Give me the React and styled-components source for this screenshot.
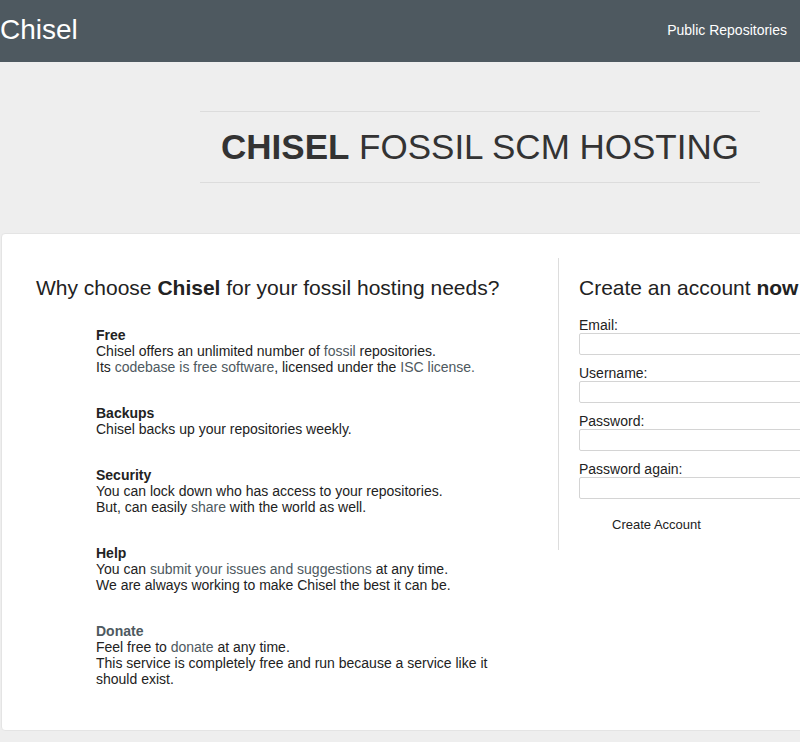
import React from "react";
import styled, { createGlobalStyle } from "styled-components";

const GlobalStyle = createGlobalStyle`
  html, body {
    margin: 0;
    padding: 0;
    overflow: hidden;
  }
  body {
    background: #eeeeee;
    font-family: "Liberation Sans", Arial, sans-serif;
    color: #222;
  }
`;

const Header = styled.div`
  height: 62px;
  background: #4e5960;
  display: flex;
  align-items: center;
  justify-content: space-between;
  padding-right: 13px;
`;

const Brand = styled.a`
  color: #fff;
  font-size: 28px;
  text-decoration: none;
  margin-top: -2px;
`;

const NavLink = styled.a`
  color: #fff;
  font-size: 14px;
  text-decoration: none;
  margin-top: -2px;
`;

const Viewport = styled.div`
  width: 100%;
  overflow: hidden;
`;

const Page = styled.div`
  width: 960px;
`;

const Jumbo = styled.div`
  margin: 49px 200px 50px;
  height: 70px;
  border-top: 1px solid #dcdcdc;
  border-bottom: 1px solid #dcdcdc;
  display: flex;
  align-items: center;
  justify-content: center;
`;

const JumboTitle = styled.h1`
  margin: 0;
  font-size: 35px;
  font-weight: normal;
  color: #333;
  b {
    font-weight: bold;
  }
`;

const Card = styled.div`
  margin-left: 1px;
  background: #fff;
  border: 1px solid #e4e4e4;
  border-radius: 4px;
  padding: 24px 0 25px;
  display: flex;
  align-items: flex-start;
`;

const LeftCol = styled.div`
  flex: 0 0 522px;
  padding: 18px 0 18px 34px;
`;

const RightCol = styled.div`
  flex: 1;
  border-left: 1px solid #dddddd;
  padding: 18px 0 14px 20px;
`;

const Heading = styled.h2`
  margin: 0 0 ${(p) => p.$gap}px;
  font-size: 21px;
  line-height: 23px;
  font-weight: normal;
  color: #222;
`;

const Features = styled.div`
  padding-left: 60px;
`;

const Feature = styled.div`
  font-size: 14px;
  line-height: 16px;
  margin-bottom: 30px;
  &:last-child {
    margin-bottom: 0;
  }
`;

const FeatureTitle = styled.div`
  font-weight: bold;
  color: ${(p) => (p.$link ? "#4e5960" : "#222")};
`;

const Link = styled.a`
  color: #4e5960;
  text-decoration: none;
`;

const Field = styled.div`
  display: flex;
  flex-direction: column;
  margin-bottom: 10px;
`;

const Label = styled.label`
  font-size: 14px;
  line-height: 16px;
  color: #222;
`;

const Input = styled.input`
  box-sizing: border-box;
  width: 360px;
  height: 22px;
  border: 1px solid #d4d4d4;
  border-radius: 2px;
  padding: 0 4px;
  font-size: 14px;
  outline: none;
`;

const SubmitButton = styled.button`
  margin: 3px 0 0 33px;
  height: 24px;
  padding: 0;
  border: none;
  background: transparent;
  font-family: "Liberation Sans", Arial, sans-serif;
  font-size: 13px;
  color: #222;
`;

const features = [
  {
    title: "Free",
    body: (
      <>
        Chisel offers an unlimited number of <Link href="#">fossil</Link> repositories.
        <br />
        Its <Link href="#">codebase is free software</Link>, licensed under the{" "}
        <Link href="#">ISC license.</Link>
      </>
    ),
  },
  {
    title: "Backups",
    body: <>Chisel backs up your repositories weekly.</>,
  },
  {
    title: "Security",
    body: (
      <>
        You can lock down who has access to your repositories.
        <br />
        But, can easily <Link href="#">share</Link> with the world as well.
      </>
    ),
  },
  {
    title: "Help",
    body: (
      <>
        You can <Link href="#">submit your issues and suggestions</Link> at any time.
        <br />
        We are always working to make Chisel the best it can be.
      </>
    ),
  },
  {
    title: "Donate",
    link: true,
    body: (
      <>
        Feel free to <Link href="#">donate</Link> at any time.
        <br />
        This service is completely free and run because a service like it
        <br />
        should exist.
      </>
    ),
  },
];

const fields = ["Email:", "Username:", "Password:", "Password again:"];

export default function App() {
  return (
    <>
      <GlobalStyle />
      <Header>
        <Brand href="#">Chisel</Brand>
        <NavLink href="#">Public Repositories</NavLink>
      </Header>
      <Viewport>
        <Page>
          <Jumbo>
            <JumboTitle>
              <b>CHISEL</b> FOSSIL SCM HOSTING
            </JumboTitle>
          </Jumbo>
          <Card>
            <LeftCol>
              <Heading $gap={28}>
                Why choose <b>Chisel</b> for your fossil hosting needs?
              </Heading>
              <Features>
                {features.map((f) => (
                  <Feature key={f.title}>
                    <FeatureTitle $link={f.link}>{f.title}</FeatureTitle>
                    {f.body}
                  </Feature>
                ))}
              </Features>
            </LeftCol>
            <RightCol>
              <Heading $gap={18}>
                Create an account <b>now</b>
              </Heading>
              <form onSubmit={(e) => e.preventDefault()}>
                {fields.map((label) => (
                  <Field key={label}>
                    <Label>{label}</Label>
                    <Input type={label.startsWith("Password") ? "password" : "text"} />
                  </Field>
                ))}
                <SubmitButton type="submit">Create Account</SubmitButton>
              </form>
            </RightCol>
          </Card>
        </Page>
      </Viewport>
    </>
  );
}
